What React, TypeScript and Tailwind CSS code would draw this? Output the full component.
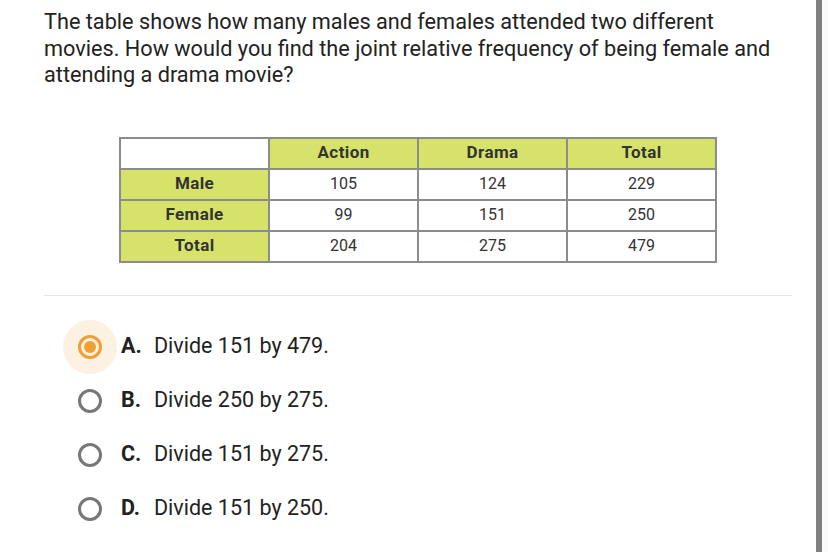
import React from "react";

const rows = [
  { label: "Male", a: "105", d: "124", t: "229" },
  { label: "Female", a: "99", d: "151", t: "250" },
  { label: "Total", a: "204", d: "275", t: "479" },
];

const options = [
  { key: "A.", text: "Divide 151 by 479.", selected: true },
  { key: "B.", text: "Divide 250 by 275.", selected: false },
  { key: "C.", text: "Divide 151 by 275.", selected: false },
  { key: "D.", text: "Divide 151 by 250.", selected: false },
];

export default function App() {
  return (
    <div className="w-[828px] h-[552px] flex bg-white overflow-hidden font-['Roboto',sans-serif] text-[#222]">
      <div className="w-[816px] h-full pl-[44px] pr-[24px] pt-[9px]">
        <p className="text-[21.7px] leading-[26.5px] w-[745px]">
          The table shows how many males and females attended two different movies. How would you find the joint relative frequency of being female and attending a drama movie?
        </p>

        {/* data table */}
        <table className="ml-[75px] mt-[48px] border-collapse w-[598px] text-center text-[#333]">
          <thead>
            <tr className="h-[31px]">
              <th className="w-[150px] border-2 border-[#8c8c8c] bg-white"></th>
              <th className="w-[150px] border-2 border-[#8c8c8c] bg-[#d6e26a] text-[17px] tracking-[0.4px] font-bold">Action</th>
              <th className="w-[150px] border-2 border-[#8c8c8c] bg-[#d6e26a] text-[17px] tracking-[0.4px] font-bold">Drama</th>
              <th className="w-[150px] border-2 border-[#8c8c8c] bg-[#d6e26a] text-[17px] tracking-[0.4px] font-bold">Total</th>
            </tr>
          </thead>
          <tbody>
            {rows.map((r) => (
              <tr key={r.label} className="h-[31px]">
                <td className="border-2 border-[#8c8c8c] bg-[#d6e26a] text-[17px] tracking-[0.4px] font-bold">{r.label}</td>
                <td className="border-2 border-[#8c8c8c] text-[16px]">{r.a}</td>
                <td className="border-2 border-[#8c8c8c] text-[16px]">{r.d}</td>
                <td className="border-2 border-[#8c8c8c] text-[16px]">{r.t}</td>
              </tr>
            ))}
          </tbody>
        </table>

        <div className="mt-[32px] h-px w-[748px] bg-[#e4e4e4]"></div>

        <div className="mt-[24px] flex flex-col">
          {options.map((o) => (
            <div key={o.key} className="h-[54px] flex items-center">
              <div className="relative w-[54px] h-[54px] ml-[19px] flex items-center justify-center">
                {o.selected && <div className="absolute inset-0 rounded-full bg-[#fdf1e1]"></div>}
                <div
                  className={`relative w-[24px] h-[24px] rounded-full border-[3px] flex items-center justify-center ${
                    o.selected ? "border-[#f0a033]" : "border-[#777]"
                  }`}
                >
                  {o.selected && <div className="w-[12px] h-[12px] rounded-full bg-[#f0a033]"></div>}
                </div>
              </div>
              <span className="ml-[4px] text-[21.5px] font-bold w-[33px]">{o.key}</span>
              <span className="text-[21.5px]">{o.text}</span>
            </div>
          ))}
        </div>
      </div>
      <div className="w-[6px] h-full bg-[#808080]"></div>
      <div className="flex-1 h-full bg-[#fafafa]"></div>
    </div>
  );
}
